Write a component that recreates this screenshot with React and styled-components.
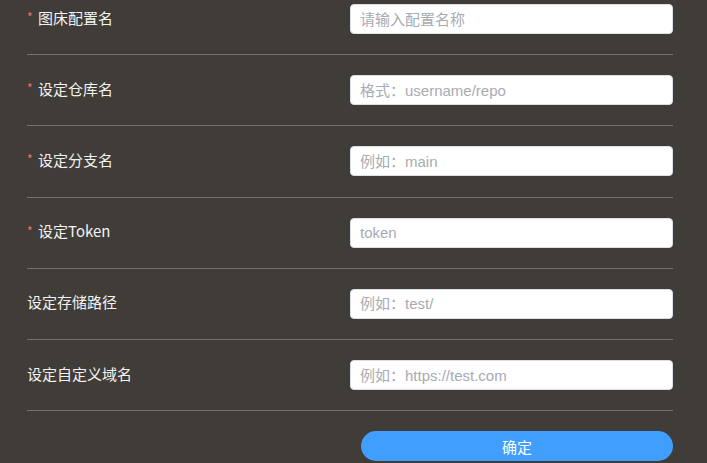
import React from 'react';
import styled, { createGlobalStyle } from 'styled-components';

const GlobalStyle = createGlobalStyle`
  html, body {
    margin: 0;
    padding: 0;
    background: #403c37;
  }
  body {
    font-family: "Liberation Sans", "Noto Sans CJK SC", sans-serif;
  }
`;

const Form = styled.div`
  width: 646px;
  margin-left: 27px;
  margin-top: -16px;
`;

const Row = styled.div`
  display: flex;
  align-items: center;
  justify-content: space-between;
  padding: 20.1px 0;
  border-bottom: 1px solid #75716c;
`;

const Label = styled.label`
  display: flex;
  align-items: center;
  margin-top: -4px;
  font-size: 15px;
  color: #f2f2f2;
  font-family: "Noto Sans CJK SC", sans-serif;
`;

const Star = styled.span`
  color: #f56c6c;
  font-size: 12px;
  width: 11px;
  margin-top: -1px;
`;

const Input = styled.input`
  box-sizing: border-box;
  width: 323px;
  height: 30px;
  padding: 0 9px;
  border: 1px solid #dcdfe6;
  border-radius: 4px;
  background: #fff;
  font-size: 15px;
  font-family: "Liberation Sans", "Noto Sans CJK SC", sans-serif;
  color: #606266;
  outline: none;
  &::placeholder {
    color: #a8abb2;
  }
`;

const Footer = styled.div`
  display: flex;
  justify-content: flex-end;
  padding-top: 20px;
`;

const Submit = styled.button`
  width: 312px;
  height: 30px;
  border: none;
  border-radius: 15px;
  background: #409eff;
  color: #fff;
  font-size: 15px;
  font-family: "Noto Sans CJK SC", sans-serif;
  cursor: pointer;
`;

const fields = [
  { label: '图床配置名', placeholder: '请输入配置名称', required: true },
  { label: '设定仓库名', placeholder: '格式：username/repo', required: true },
  { label: '设定分支名', placeholder: '例如：main', required: true },
  { label: '设定Token', placeholder: 'token', required: true },
  { label: '设定存储路径', placeholder: '例如：test/' },
  { label: '设定自定义域名', placeholder: '例如：https://test.com' },
];

export default function App() {
  return (
    <>
      <GlobalStyle />
      <Form>
        {fields.map((f) => (
          <Row key={f.label}>
            <Label>
              {f.required && <Star>*</Star>}
              {f.label}
            </Label>
            <Input placeholder={f.placeholder} />
          </Row>
        ))}
        <Footer>
          <Submit>确定</Submit>
        </Footer>
      </Form>
    </>
  );
}
